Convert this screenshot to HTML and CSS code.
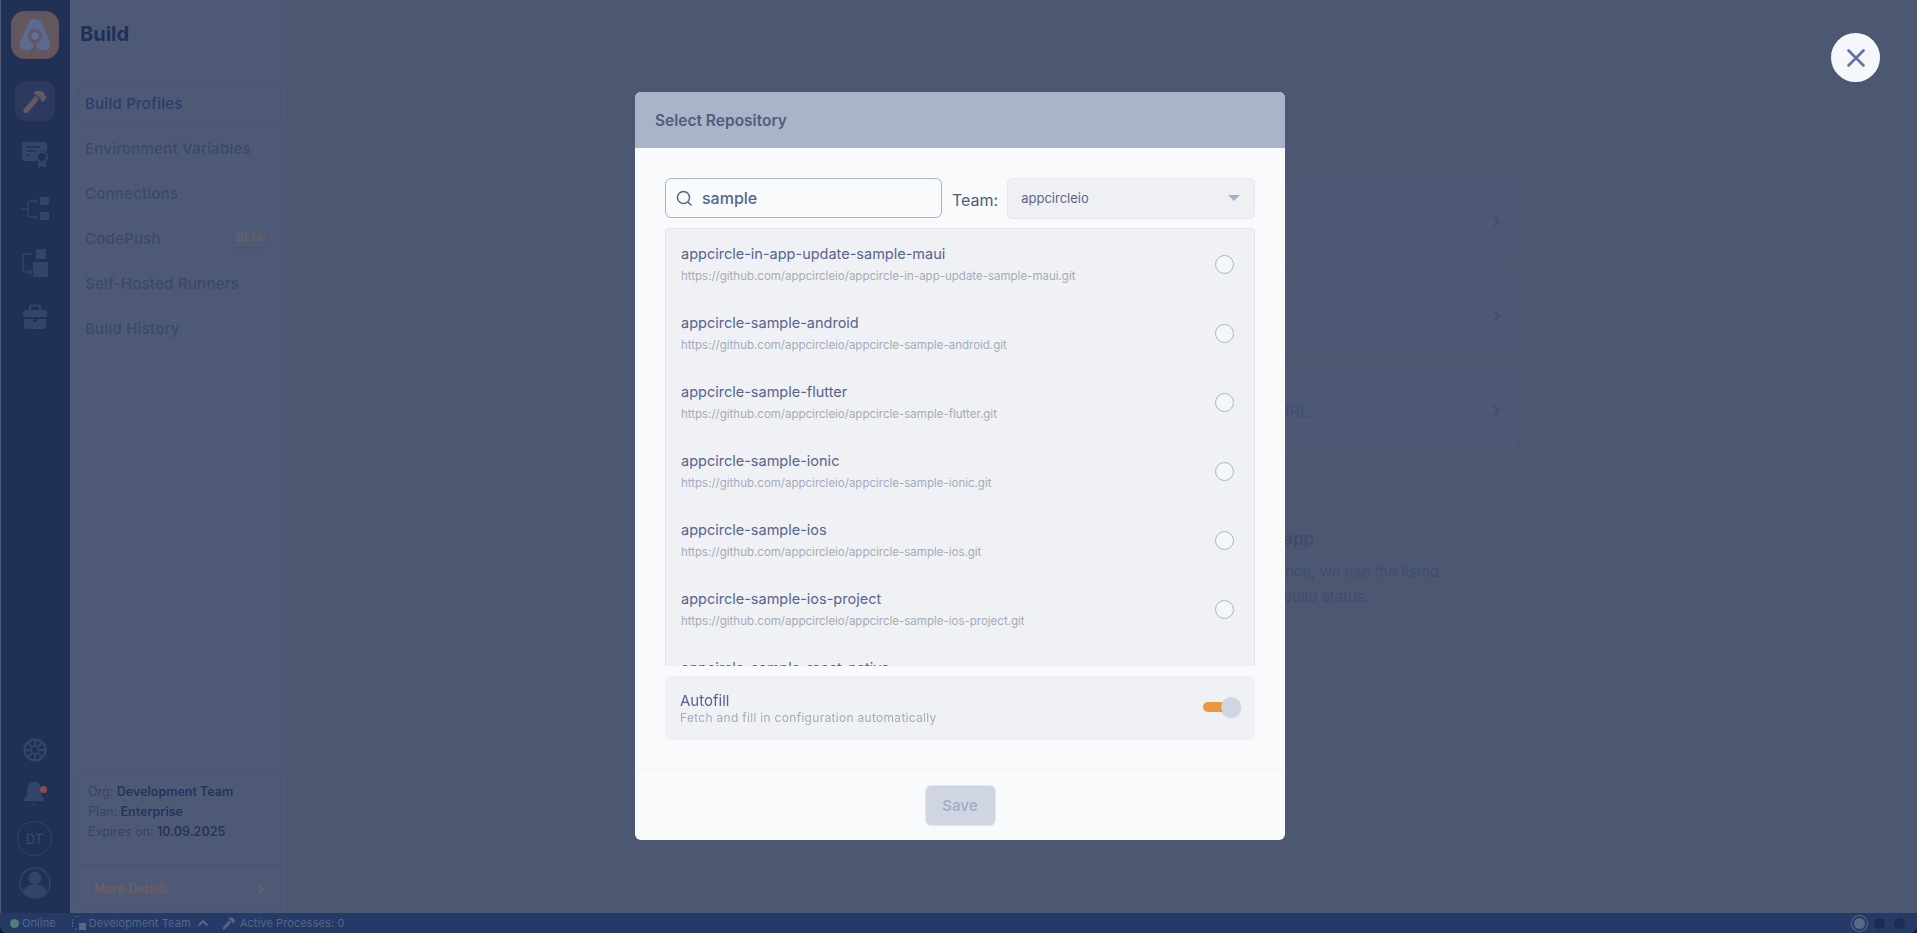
FILE: index.html
```html
<!DOCTYPE html>
<html lang="en">
<head>
    <meta charset="UTF-8">
    <meta name="viewport" content="width=device-width, initial-scale=1.0">
    <title>Build</title>
    <link rel="stylesheet" href="styles.css">
</head>
<body>
    <div class="app">
        <!-- Icon rail -->
        <nav class="rail">
            <div class="logo">
                <svg width="48" height="48" viewBox="0 0 48 48">
                    <path d="M24 8c-3.500 0-5.500 2-7 5L9.500 30C7 36 11 39.500 15.500 39.500c4 0 6.500-2.500 8.500-5.500 2 3 4.500 5.500 8.500 5.500C37 39.500 41 36 38.500 30L31 13C29.500 10 27.500 8 24 8z" fill="#5a6b92"/>
                    <path d="M22.500 30h3v6h-3z" fill="#64565f"/>
                    <circle cx="24" cy="25" r="7" fill="#64565f"/>
                    <circle cx="24" cy="25" r="3.700" fill="#5f7199"/>
                </svg>
            </div>
            <div class="rail-top">
                <a class="rail-item active">
                    <svg width="26" height="26" viewBox="0 0 26 26"><path d="M4 22.500L14 11" stroke="#665a62" stroke-width="5" stroke-linecap="round"/><path d="M11 5c3-3 8-3 11 0l1 3 2 1-4 5-2-1-.5-2.500-2.500-2.500-2-1z" fill="#665a62"/></svg>
                </a>
                <a class="rail-item">
                    <svg width="28" height="28" viewBox="0 0 28 28"><path d="M3 1h21a2 2 0 0 1 2 2v8a7 7 0 0 0-10 9H3a2 2 0 0 1-2-2V3a2 2 0 0 1 2-2z" fill="#354469"/><path d="M5 6h14M5 10h10M5 14h3" stroke="#213055" stroke-width="1.500"/><circle cx="21" cy="16" r="5" fill="none" stroke="#354469" stroke-width="2.200"/><path d="M17 21v6l4-2 4 2v-6l-4 1.500z" fill="#354469"/></svg>
                </a>
                <a class="rail-item">
                    <svg width="30" height="26" viewBox="0 0 30 26"><rect x="20" y="1" width="9" height="8" fill="#354469"/><rect x="20" y="16" width="9" height="8" fill="#354469"/><path d="M1 13h6M16 5h-5a3 3 0 0 0-3 3v10a3 3 0 0 0 3 3h5M14 3l2.500 2-2.500 2M14 19l2.500 2-2.500 2" fill="none" stroke="#354469" stroke-width="1.300"/></svg>
                </a>
                <a class="rail-item">
                    <svg width="28" height="30" viewBox="0 0 28 30"><rect x="15" y="1" width="10" height="10" fill="#354469"/><rect x="12" y="14" width="15" height="15" fill="#354469"/><path d="M11 6H4a2 2 0 0 0-2 2v14a2 2 0 0 0 2 2h6M8 21.500l2.500 2.500L8 26.500" fill="none" stroke="#354469" stroke-width="1.400"/></svg>
                </a>
                <a class="rail-item">
                    <svg width="26" height="26" viewBox="0 0 26 26"><path d="M8 6V3.500A2 2 0 0 1 10 1.500h6a2 2 0 0 1 2 2V6" fill="none" stroke="#354469" stroke-width="2"/><path d="M3 6h20a2 2 0 0 1 2 2v5H1V8a2 2 0 0 1 2-2zM2 15h9v3h4v-3h9v7a3 3 0 0 1-3 3H5a3 3 0 0 1-3-3z" fill="#354469"/></svg>
                </a>
            </div>
            <div class="rail-bottom">
                <svg class="wheel" width="24" height="24" viewBox="0 0 24 24"><circle cx="12" cy="12" r="10.500" fill="none" stroke="#354469" stroke-width="2.400"/><circle cx="12" cy="12" r="4" fill="none" stroke="#354469" stroke-width="2"/><path d="M12 2v5M12 17v5M2 12h5M17 12h5M5 5l3.500 3.500M15.500 15.500L19 19M19 5l-3.500 3.500M8.500 15.500L5 19" stroke="#354469" stroke-width="2"/></svg>
                <span class="bell">
                    <svg width="22" height="26" viewBox="0 0 22 26"><path d="M11 1c-4.500 0-7 3.500-7 8v5l-3 4.500v1.500h20v-1.500L18 14V9c0-4.500-2.500-8-7-8z" fill="#354469"/><path d="M8.500 22.500h5L11 25z" fill="#354469"/></svg>
                    <i class="bell-dot"></i>
                </span>
                <span class="avatar-dt">DT</span>
                <svg class="user" width="32" height="32" viewBox="0 0 32 32"><circle cx="16" cy="16" r="15" fill="none" stroke="#354469" stroke-width="1.500"/><circle cx="16" cy="11" r="6.500" fill="#354469"/><path d="M4.500 25c1-5.500 6-7.500 11.500-7.500S26.500 19.500 27.500 25c-3 3.500-7 5.200-11.500 5.200S7.500 28.500 4.500 25z" fill="#354469"/></svg>
            </div>
        </nav>

        <!-- Section menu -->
        <aside class="sidebar">
            <h1 class="sidebar-title">Build</h1>
            <ul class="menu">
                <li class="menu-item selected">Build Profiles</li>
                <li class="menu-item">Environment Variables</li>
                <li class="menu-item">Connections</li>
                <li class="menu-item">CodePush <span class="beta">BETA</span></li>
                <li class="menu-item">Self-Hosted Runners</li>
                <li class="menu-item">Build History</li>
            </ul>
            <div class="org-card">
                <div class="org-info">
                    <p>Org: <b>Development Team</b></p>
                    <p>Plan: <b>Enterprise</b></p>
                    <p>Expires on: <b>10.09.2025</b></p>
                </div>
                <div class="org-more">
                    More Details
                    <svg width="8" height="12" viewBox="0 0 8 12"><path d="M1.500 1.500L6 6l-4.500 4.500" fill="none" stroke="#5e6268" stroke-width="2"/></svg>
                </div>
            </div>
        </aside>

        <!-- Page behind the dialog -->
        <main class="content">
            <div class="connect-list">
                <div class="connect-card"><span class="connect-label hidden-label">GitHub</span><svg width="8" height="12" viewBox="0 0 8 12"><path d="M1.500 1.500L6 6l-4.500 4.500" fill="none" stroke="#3f4d73" stroke-width="2"/></svg></div>
                <div class="connect-card"><span class="connect-label hidden-label">GitLab</span><svg width="8" height="12" viewBox="0 0 8 12"><path d="M1.500 1.500L6 6l-4.500 4.500" fill="none" stroke="#3f4d73" stroke-width="2"/></svg></div>
                <div class="connect-card"><span class="connect-label">Repository URL</span><svg width="8" height="12" viewBox="0 0 8 12"><path d="M1.500 1.500L6 6l-4.500 4.500" fill="none" stroke="#3f4d73" stroke-width="2"/></svg></div>
            </div>
            <div class="connect-note">
                <h3>your app</h3>
                <p class="note-first">experience, we use the listed</p>
                <p class="note-second">track the build status.</p>
            </div>
        </main>

        <footer class="statusbar">
            <span class="online-dot"></span>
            <span class="status-online">Online</span>
            <svg class="org-icon" width="14" height="14" viewBox="0 0 14 14"><rect x="7" y="7" width="7" height="7" fill="#556689"/><path d="M3 .5h4M.5 3v8M3 13h2" stroke="#556689" stroke-dasharray="2 1" fill="none"/></svg>
            <span class="status-team">Development Team</span>
            <svg class="status-up" width="12" height="8" viewBox="0 0 12 8"><path d="M1.500 6.500L6 2l4.500 4.500" fill="none" stroke="#556689" stroke-width="2"/></svg>
            <svg class="status-hammer" width="14" height="14" viewBox="0 0 26 26"><path d="M4 22.500L14 11" stroke="#556689" stroke-width="5" stroke-linecap="round"/><path d="M11 5c3-3 8-3 11 0l1 3 2 1-4 5-2-1-.5-2.500-2.500-2.500-2-1z" fill="#556689"/></svg>
            <span class="status-proc">Active Processes: 0</span>
            <span class="status-dots">
                <i class="dot-on"></i>
                <i></i>
                <i></i>
            </span>
        </footer>
    </div>

    <!-- Dialog -->
    <div class="overlay">
        <section class="modal">
            <header class="modal-head">Select Repository</header>
            <div class="modal-body">
                <div class="filters">
                    <label class="search">
                        <svg width="17" height="17" viewBox="0 0 17 17"><circle cx="7.500" cy="7.500" r="6" fill="none" stroke="#56658c" stroke-width="1.500"/><path d="M12 12l3.500 3.500" stroke="#56658c" stroke-width="1.500"/></svg>
                        <span>sample</span>
                    </label>
                    <span class="team-label">Team:</span>
                    <div class="team-select">
                        <span>appcircleio</span>
                        <i class="caret"></i>
                    </div>
                </div>
                <div class="repo-list">
                    <div class="repo">
                        <div class="repo-text"><div class="repo-name">appcircle-in-app-update-sample-maui</div><div class="repo-url">https://github.com/appcircleio/appcircle-in-app-update-sample-maui.git</div></div>
                        <i class="radio"></i>
                    </div>
                    <div class="repo">
                        <div class="repo-text"><div class="repo-name">appcircle-sample-android</div><div class="repo-url">https://github.com/appcircleio/appcircle-sample-android.git</div></div>
                        <i class="radio"></i>
                    </div>
                    <div class="repo">
                        <div class="repo-text"><div class="repo-name">appcircle-sample-flutter</div><div class="repo-url">https://github.com/appcircleio/appcircle-sample-flutter.git</div></div>
                        <i class="radio"></i>
                    </div>
                    <div class="repo">
                        <div class="repo-text"><div class="repo-name">appcircle-sample-ionic</div><div class="repo-url">https://github.com/appcircleio/appcircle-sample-ionic.git</div></div>
                        <i class="radio"></i>
                    </div>
                    <div class="repo">
                        <div class="repo-text"><div class="repo-name">appcircle-sample-ios</div><div class="repo-url">https://github.com/appcircleio/appcircle-sample-ios.git</div></div>
                        <i class="radio"></i>
                    </div>
                    <div class="repo">
                        <div class="repo-text"><div class="repo-name">appcircle-sample-ios-project</div><div class="repo-url">https://github.com/appcircleio/appcircle-sample-ios-project.git</div></div>
                        <i class="radio"></i>
                    </div>
                    <div class="repo repo-cut">
                        <div class="repo-text"><div class="repo-name">appcircle-sample-react-native</div></div>
                    </div>
                </div>
                <div class="autofill">
                    <div>
                        <div class="autofill-title">Autofill</div>
                        <div class="autofill-desc">Fetch and fill in configuration automatically</div>
                    </div>
                    <span class="toggle"><i></i></span>
                </div>
            </div>
            <footer class="modal-foot">
                <button disabled>Save</button>
            </footer>
        </section>
        <button class="close-btn" aria-label="Close">
            <svg width="18" height="18" viewBox="0 0 18 18"><path d="M1.500 1.500l15 15M16.500 1.500l-15 15" stroke="#5f74a5" stroke-width="2.600" stroke-linecap="round"/></svg>
        </button>
    </div>
</body>
</html>
```

FILE: styles.css
```css
* {
    box-sizing: border-box;
}
html, body {
    height: 100%;
    margin: 0;
    overflow: hidden;
    background-color: #141b2e;
    font-family: Inter, "Noto Sans", sans-serif;
}
p, h1, h3, ul {
    margin: 0;
    padding: 0;
}
.app {
    display: grid;
    grid-template-columns: 70px 218px 1fr;
    grid-template-rows: 1fr 20px;
    height: 100vh;
    border-radius: 0 0 8px 8px;
    overflow: hidden;
    background-color: #4c5772;
}

/* Icon rail */
.rail {
    display: flex;
    flex-direction: column;
    align-items: center;
    background-color: #213055;
    border-left: 1px solid #4c5772;
    padding: 11px 2px 14px 0;
}
.logo {
    width: 48px;
    height: 48px;
    border-radius: 14px;
    background-color: #64565f;
}
.rail-top {
    display: flex;
    flex-direction: column;
    align-items: center;
    gap: 14px;
    margin-top: 22px;
}
.rail-item {
    display: flex;
    align-items: center;
    justify-content: center;
    width: 40px;
    height: 40px;
    border-radius: 10px;
}
.rail-item.active {
    background-color: #2c3a5f;
}
.rail-bottom {
    margin-top: auto;
    display: flex;
    flex-direction: column;
    align-items: center;
}
.bell {
    position: relative;
    display: block;
    height: 26px;
    margin: 19px 2px 0 0;
}
.bell-dot {
    position: absolute;
    top: 5px;
    right: -2px;
    width: 7px;
    height: 7px;
    border-radius: 50%;
    background-color: #8c4a58;
}
.avatar-dt {
    display: flex;
    align-items: center;
    justify-content: center;
    width: 35px;
    height: 35px;
    margin-top: 14px;
    border: 1.5px solid #354469;
    border-radius: 50%;
    color: #3d4c72;
    font-size: 13px;
}
.user {
    margin-top: 11px;
}

/* Section menu */
.sidebar {
    display: flex;
    flex-direction: column;
    background-color: #4e5a75;
    padding: 0 6px 1px 8px;
    border-right: 1px solid #4b5771;
}
.sidebar-title {
    margin: 22px 0 0 2px;
    color: #1f3058;
    font-size: 20px;
    line-height: 24px;
    font-weight: 700;
}
.menu {
    list-style: none;
    margin-top: 37px;
}
.menu-item {
    display: flex;
    align-items: center;
    height: 41px;
    margin-bottom: 4px;
    padding-left: 6px;
    border: 1px solid transparent;
    border-radius: 8px;
    color: #3a486b;
    font-size: 15px;
    font-weight: 500;
    letter-spacing: .25px;
}
.menu-item.selected {
    color: #2b3c67;
    border-color: #47557a;
}
.beta {
    margin-left: auto;
    margin-right: 13px;
    margin-top: -3px;
    padding: 3px 3px;
    border-radius: 3px;
    background-color: #4f5b76;
    color: #78605a;
    font-size: 10px;
    font-weight: 400;
    line-height: 14px;
    letter-spacing: .6px;
    box-shadow: 0 1px 2px rgba(50, 60, 90, .3);
}
.org-card {
    margin-top: auto;
    height: 140px;
    border: 1px solid #4a5672;
    border-radius: 8px;
    font-size: 12.5px;
    color: #34436a;
}
.org-info {
    height: 93px;
    padding: 9px 9px;
    border-bottom: 1px solid #48546f;
    line-height: 20px;
}
.org-info b {
    color: #24345c;
    font-weight: 600;
}
.org-more {
    display: flex;
    align-items: center;
    justify-content: space-between;
    height: 45px;
    padding: 0 15px;
    color: #75605c;
}

/* Page behind the dialog */
.content {
    padding: 179px 397px 0 397px;
}
.connect-list {
    display: flex;
    flex-direction: column;
    gap: 12px;
    color: #3f4d73;
    font-size: 16px;
}
.connect-card {
    display: flex;
    align-items: center;
    height: 83px;
    padding-right: 18px;
    border: 1px solid #4a5570;
    border-radius: 8px;
    background-color: #4d5874;
}
.connect-label {
    flex: 1;
    text-align: right;
    padding-right: 184px;
}
.hidden-label {
    padding-right: 240px;
}
.connect-note {
    margin-top: 75px;
    text-align: right;
    color: #404d6f;
    font-size: 15px;
    line-height: 25px;
}
.connect-note h3 {
    color: #3e4a6b;
    font-size: 17px;
    font-weight: 500;
    margin-bottom: 7px;
    padding-right: 206px;
}
.note-first {
    padding-right: 81px;
}
.note-second {
    padding-right: 151px;
}

/* Status bar */
.statusbar {
    grid-column: 1 / -1;
    display: flex;
    align-items: center;
    padding-left: 10px;
    background-color: #253a66;
    color: #556689;
    font-size: 11px;
    letter-spacing: .1px;
}
.online-dot {
    width: 9px;
    height: 9px;
    border-radius: 50%;
    background-color: #4f7f78;
}
.status-online {
    margin-left: 3px;
}
.org-icon {
    margin-left: 16px;
}
.status-team {
    margin-left: 3px;
}
.status-up {
    margin-left: 6px;
}
.status-hammer {
    margin-left: 13px;
}
.status-proc {
    margin-left: 4px;
}
.status-dots {
    margin-left: auto;
    margin-right: 12px;
    display: flex;
    align-items: center;
    gap: 9px;
}
.status-dots i {
    width: 11px;
    height: 11px;
    border-radius: 50%;
    background-color: #1d2c52;
}
.status-dots .dot-on {
    background-color: #5a6788;
    box-shadow: 0 0 0 2px #253a66, 0 0 0 3px #5a6788;
}

/* Dialog */
.overlay {
    position: fixed;
    inset: 0;
    display: flex;
    align-items: center;
    justify-content: center;
    padding: 0 0 2px 3px;
}
.modal {
    width: 650px;
    height: 748px;
    display: flex;
    flex-direction: column;
    border-radius: 6px;
    overflow: hidden;
    background-color: #f9fafc;
}
.modal-head {
    height: 56px;
    padding: 2px 0 0 20px;
    display: flex;
    align-items: center;
    background-color: #a9b4c8;
    color: #505d7d;
    font-size: 15.5px;
    font-weight: 600;
}
.modal-body {
    flex: 1;
    padding: 30px 30px 0;
}
.filters {
    display: flex;
    align-items: center;
    height: 41px;
}
.search {
    display: flex;
    align-items: center;
    gap: 9px;
    width: 277px;
    height: 40px;
    padding-left: 10px;
    border: 1px solid #a9b4cc;
    border-radius: 6px;
    color: #56658c;
    font-size: 16px;
    font-weight: 500;
}
.team-label {
    margin: 3px 9px 0 10px;
    color: #505d7d;
    font-size: 16px;
}
.team-select {
    flex: 1;
    height: 41px;
    display: flex;
    align-items: center;
    justify-content: space-between;
    padding: 0 14px 0 13px;
    border: 1px solid #e6e8ee;
    border-radius: 5px;
    background-color: #eef0f4;
    color: #5a6785;
    font-size: 13px;
}
.caret {
    width: 0;
    height: 0;
    border-left: 6px solid transparent;
    border-right: 6px solid transparent;
    border-top: 6px solid #a3afc9;
}
.repo-list {
    height: 438px;
    margin-top: 9px;
    padding-top: 1px;
    overflow: hidden;
    border: 1px solid #e3e5ec;
    border-bottom: none;
    border-radius: 4px 4px 0 0;
    background-color: #eff1f5;
}
.repo {
    display: flex;
    align-items: center;
    justify-content: space-between;
    height: 69px;
    padding: 13px 20px 13px 15px;
}
.repo-text {
    padding-top: 1px;
}
.repo-cut {
    align-items: flex-start;
}
.repo-name {
    color: #55648f;
    font-size: 14.5px;
    line-height: 20px;
}
.repo-url {
    margin-top: 3px;
    color: #a5abba;
    font-size: 11.5px;
    line-height: 18px;
}
.radio {
    width: 19px;
    height: 19px;
    border: 1px solid #a9b4cf;
    border-radius: 50%;
    background-color: #f5f6fa;
}
.autofill {
    display: flex;
    align-items: center;
    justify-content: space-between;
    height: 64px;
    margin-top: 10px;
    padding: 0 15px;
    border-radius: 6px;
    background-color: #eff1f5;
}
.autofill-title {
    color: #55648f;
    font-size: 15px;
    line-height: 18px;
    margin-top: 2px;
}
.autofill-desc {
    color: #a5abba;
    font-size: 12px;
    line-height: 15px;
    letter-spacing: .3px;
}
.toggle {
    position: relative;
    width: 38px;
    height: 10px;
    margin-right: -1px;
    margin-top: -1px;
    border-radius: 5px;
    background: linear-gradient(90deg, #ed9840 60%, transparent 60%);
}
.toggle i {
    position: absolute;
    top: -5px;
    right: 0;
    width: 20px;
    height: 20px;
    border-radius: 50%;
    background-color: #cfd5e1;
    box-shadow: 0 1px 2px rgba(90, 100, 130, .25);
}
.modal-foot {
    height: 71px;
    display: flex;
    justify-content: center;
    padding-top: 15px;
    border-top: 1px solid #f3f4f7;
}
.modal-foot button {
    width: 71px;
    height: 41px;
    border: 1px solid #e2e5ed;
    border-radius: 6px;
    background-color: #cfd5e1;
    color: #a5aec4;
    font-family: inherit;
    font-size: 15px;
    font-weight: 600;
}
.close-btn {
    position: absolute;
    top: 33px;
    left: 1831px;
    display: flex;
    align-items: center;
    justify-content: center;
    width: 49px;
    height: 49px;
    padding: 0;
    border: none;
    border-radius: 50%;
    background-color: #f6f7fa;
}
```
